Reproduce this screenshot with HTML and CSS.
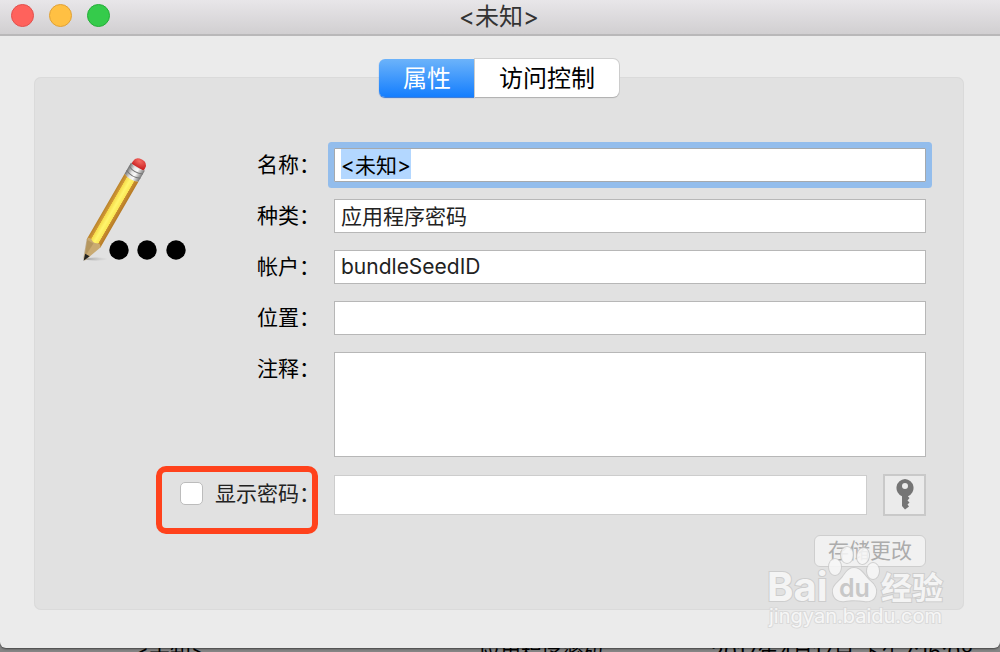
FILE: index.html
```html
<!DOCTYPE html>
<html lang="zh-CN">
  <head>
    <meta charset="UTF-8" />
    <meta name="viewport" content="width=device-width, initial-scale=1.0" />
    <title>&lt;未知&gt;</title>
    <link rel="stylesheet" href="styles.css">
  </head>
  <body>
    <main class="window">
      <header class="titlebar">
        <div class="lights">
          <button class="light close" aria-label="关闭"></button>
          <button class="light minimize" aria-label="最小化"></button>
          <button class="light zoom" aria-label="缩放"></button>
        </div>
        <h1>&lt;未知&gt;</h1>
      </header>

      <section class="panel">
        <div class="tabs" role="tablist">
          <button class="tab active" role="tab" aria-selected="true">属性</button>
          <button class="tab" role="tab" aria-selected="false">访问控制</button>
        </div>

        <form class="fields">
          <svg class="item-icon" viewBox="0 0 110 112" aria-hidden="true">
            <defs>
              <linearGradient id="wood" x1="0" x2="1">
                <stop offset="0" stop-color="#b9822a" />
                <stop offset="0.22" stop-color="#d39a35" />
                <stop offset="0.25" stop-color="#f6dc4c" />
                <stop offset="0.5" stop-color="#fff56c" />
                <stop offset="0.74" stop-color="#fbe755" />
                <stop offset="0.77" stop-color="#c88d30" />
                <stop offset="1" stop-color="#b67a25" />
              </linearGradient>
              <linearGradient id="metal" x1="0" x2="1">
                <stop offset="0" stop-color="#6d6d6d" />
                <stop offset="0.35" stop-color="#e6e6e6" />
                <stop offset="0.6" stop-color="#fafafa" />
                <stop offset="1" stop-color="#777" />
              </linearGradient>
              <radialGradient id="rubber" cx="0.4" cy="0.3" r="0.7">
                <stop offset="0" stop-color="#f56a62" />
                <stop offset="1" stop-color="#cd2727" />
              </radialGradient>
              <linearGradient id="shade" x1="0" x2="1">
                <stop offset="0" stop-color="#777" stop-opacity="0.6" />
                <stop offset="1" stop-color="#999" stop-opacity="0" />
              </linearGradient>
            </defs>
            <ellipse cx="16" cy="106" rx="12" ry="1.5" fill="url(#shade)" />
            <g transform="translate(4 107) rotate(30)">
              <path d="M-7 -107v-3q0-6 7-6t7 6v3z" fill="url(#rubber)" />
              <path d="M-8 -108q8 4 16 0v13q-8 4-16 0z" fill="url(#metal)" />
              <path d="M-8 -104q8 4 16 0M-8 -99q8 4 16 0" fill="none" stroke="#777" stroke-width="1" />
              <path d="M-8 -95q8 4 16 0v76h-16z" fill="url(#wood)" />
              <path d="M-8 -21q3-2 5 0 3 2 6 0 3-2 5 2L1 0h-1z" fill="#c9aa72" />
              <path d="M-8 -19L-1 0 0 -19z" fill="#a98b55" opacity="0.6" />
              <path d="M-2 -6h5L0 1z" fill="#222" />
            </g>
            <circle cx="39" cy="97" r="9.7" />
            <circle cx="67" cy="97" r="9.7" />
            <circle cx="96" cy="97" r="9.7" />
          </svg>

          <label for="name">名称：</label>
          <input type="text" id="name" value="&lt;未知&gt;" autofocus />

          <label for="kind">种类：</label>
          <input type="text" id="kind" value="应用程序密码" />

          <label for="account">帐户：</label>
          <input type="text" id="account" value="bundleSeedID" spellcheck="false" />

          <label for="where">位置：</label>
          <input type="text" id="where" />

          <label for="comments">注释：</label>
          <textarea id="comments"></textarea>

          <label class="show-password">
            <input type="checkbox" id="show-password" />
            显示密码：
          </label>
          <div class="password-row">
            <input type="password" id="password" aria-label="密码" />
            <button type="button" class="key-btn" aria-label="密码助理">
              <svg viewBox="0 0 18 31" aria-hidden="true">
                <path fill-rule="evenodd" d="M9 0a9 9 0 0 0-3 17.300V27l3 3.500 4-3-1.500-2 2-2-2-2 2-2.500-1.500-1.500v-.2A9 9 0 0 0 9 0zm0 4a3 3 0 1 1 0 6 3 3 0 0 1 0-6z" />
              </svg>
            </button>
          </div>

          <button type="button" class="save-btn" disabled>存储更改</button>
        </form>
      </section>

      <svg class="watermark" viewBox="0 0 184 90" aria-hidden="true">
        <g class="mark">
          <text class="brand" x="0" y="55">Bai</text>
          <ellipse cx="68" cy="21" rx="6" ry="8" />
          <ellipse cx="80" cy="9" rx="6" ry="8" />
          <ellipse cx="96" cy="10" rx="6" ry="8" transform="rotate(10 96 10)" />
          <ellipse cx="106" cy="25" rx="6" ry="8" />
          <path d="M87 22c7 0 10 7 15 12 5 4 8 8 7 13-1 7-6 9-12 8-6-1-14-1-19 0-6 1-11-2-12-8-1-6 3-9 8-14 4-4 6-11 13-11z" />
          <text class="cn" x="114" y="53">经验</text>
          <text class="site" x="2" y="77">jingyan.baidu.com</text>
        </g>
        <text class="du" x="72" y="51">du</text>
      </svg>
    </main>

    <div class="list-row">
      <span>&lt;未知&gt;</span>
      <span>应用程序密码</span>
      <span>2017年4月17日 下午7:16:08</span>
    </div>

    <script>
      document.getElementById("name").select();
    </script>
  </body>
</html>
```
FILE: styles.css
```css
* {
  box-sizing: border-box;
}

body {
  margin: 0;
  height: 100vh;
  overflow: hidden;
  background: #858585;
  color: #000;
  font-family: Inter, "Noto Sans CJK SC", sans-serif;
  font-size: 21px;
  line-height: 26px;
}

button,
input,
textarea {
  font: inherit;
  margin: 0;
}

.window {
  position: relative;
  z-index: 1;
  padding-bottom: 38px;
  background: #ebebeb;
  border-radius: 0 0 6px 6px;
  box-shadow: 0 1px 2px rgba(0, 0, 0, 0.5);
}

/* title bar */
.titlebar {
  display: grid;
  grid-template-columns: 1fr auto 1fr;
  align-items: center;
  height: 36px;
  padding: 0 13px 0 11px;
  background: linear-gradient(#e8e6e9, #d1cfd1);
  border-bottom: 2px solid #b9b8b9;
}

.titlebar h1 {
  margin: 0;
  color: #333;
  font-size: 24px;
  font-weight: 400;
  line-height: 32px;
}

.lights {
  display: flex;
  gap: 15px;
  padding-bottom: 4px;
}

.light {
  width: 23px;
  height: 23px;
  padding: 0;
  border: 1px solid;
  border-radius: 50%;
}

.close {
  background: #ff625c;
  border-color: #e2504d;
}

.minimize {
  background: #ffc043;
  border-color: #e0a136;
}

.zoom {
  background: #35cb4b;
  border-color: #24ae38;
}

/* panel */
.panel {
  margin: 41px 36px 0 34px;
  padding: 0 38px 43px;
  background: #e1e1e1;
  border-radius: 7px;
  box-shadow: inset 0 0 0 1px #dadada;
}

.tabs {
  display: flex;
  justify-content: center;
  position: relative;
  top: -18px;
}

.tab {
  height: 38px;
  padding: 2px 24px 0;
  background: #fff;
  border: 0;
  border-radius: 0 6px 6px 0;
  box-shadow: 0 1px 1px #b0b0b0, 0 0 0 1px #d0d0d0;
  font-size: 24px;
}

.tab.active {
  color: #fff;
  background: linear-gradient(#6cb3fa, #147efe);
  border-radius: 6px 0 0 6px;
  box-shadow: 0 1px 1px #2f74d8;
}

.fields {
  display: grid;
  grid-template-columns: 171px 63px 1fr;
  gap: 17px 14px;
  padding-top: 33px;
}

.fields > label {
  padding-top: 4px;
  white-space: nowrap;
}

.item-icon {
  grid-row: 1 / 6;
  width: 110px;
  height: 112px;
  margin: 5px 0 0 8px;
  overflow: visible;
}

input[type="text"],
input[type="password"],
textarea {
  width: 100%;
  min-width: 0;
  height: 34px;
  padding: 1px 6px 3px;
  background: #fff;
  border: 1px solid #b7b7b7;
  border-radius: 0;
  color: #222;
  outline: none;
}

textarea {
  display: block;
  height: 105px;
  resize: none;
}

input[type="text"]:focus {
  border-color: #a5a9ad;
  border-radius: 1px;
  box-shadow: 0 0 0 6px #93bdec;
}

::selection {
  background: #b3d7ff;
  color: #000;
}

.fields > .show-password {
  position: relative;
  display: flex;
  grid-column: 1 / 3;
  justify-content: flex-end;
  align-items: flex-start;
  gap: 12px;
  padding-top: 7px;
  color: #222;
}

.show-password input {
  appearance: none;
  width: 23px;
  height: 23px;
  margin-top: 1px;
  background: #fff;
  border: 1px solid #bcbcbc;
  border-radius: 5px;
}

/* red frame round the checkbox */
.show-password::after {
  content: "";
  box-sizing: border-box;
  position: absolute;
  top: -8px;
  right: 2px;
  width: 162px;
  height: 68px;
  border: 6px solid #ff421c;
  border-radius: 10px;
  pointer-events: none;
}

.password-row {
  display: flex;
  gap: 16px;
  align-items: center;
}

.password-row input[type="password"] {
  flex: 1;
  height: 40px;
  border-color: #cdcdcd;
}

.key-btn {
  display: grid;
  place-items: center;
  width: 43px;
  height: 42px;
  padding: 0 0 2px;
  background: #ebebeb;
  border: 2px solid #c9c9c9;
}

.key-btn svg {
  width: 18px;
  height: 31px;
  fill: #757575;
}

.save-btn {
  grid-column: 3;
  justify-self: end;
  height: 32px;
  margin-top: 2px;
  padding: 0 13px;
  background: #f1f1f1;
  border: 1px solid #cecece;
  border-radius: 6px;
  color: #acacac;
}

/* watermark */
.watermark {
  position: absolute;
  right: 49px;
  bottom: 12px;
  width: 184px;
  height: 90px;
  pointer-events: none;
}

.mark {
  fill: #f8f8f8;
  stroke: #cacaca;
  stroke-width: 2px;
  paint-order: stroke;
  opacity: 0.85;
}

.brand {
  font-size: 40px;
  font-weight: 700;
}

.cn {
  font-size: 31px;
  font-weight: 700;
}

.site {
  font-size: 20px;
  stroke: #d8d8d8;
}

.du {
  fill: #c8c8c8;
  font-size: 25px;
  font-weight: 600;
}

/* keychain list behind the window */
.list-row {
  display: grid;
  grid-template-columns: 344px 232px 1fr;
  margin-top: -8px;
  padding-left: 135px;
  white-space: nowrap;
}
```
